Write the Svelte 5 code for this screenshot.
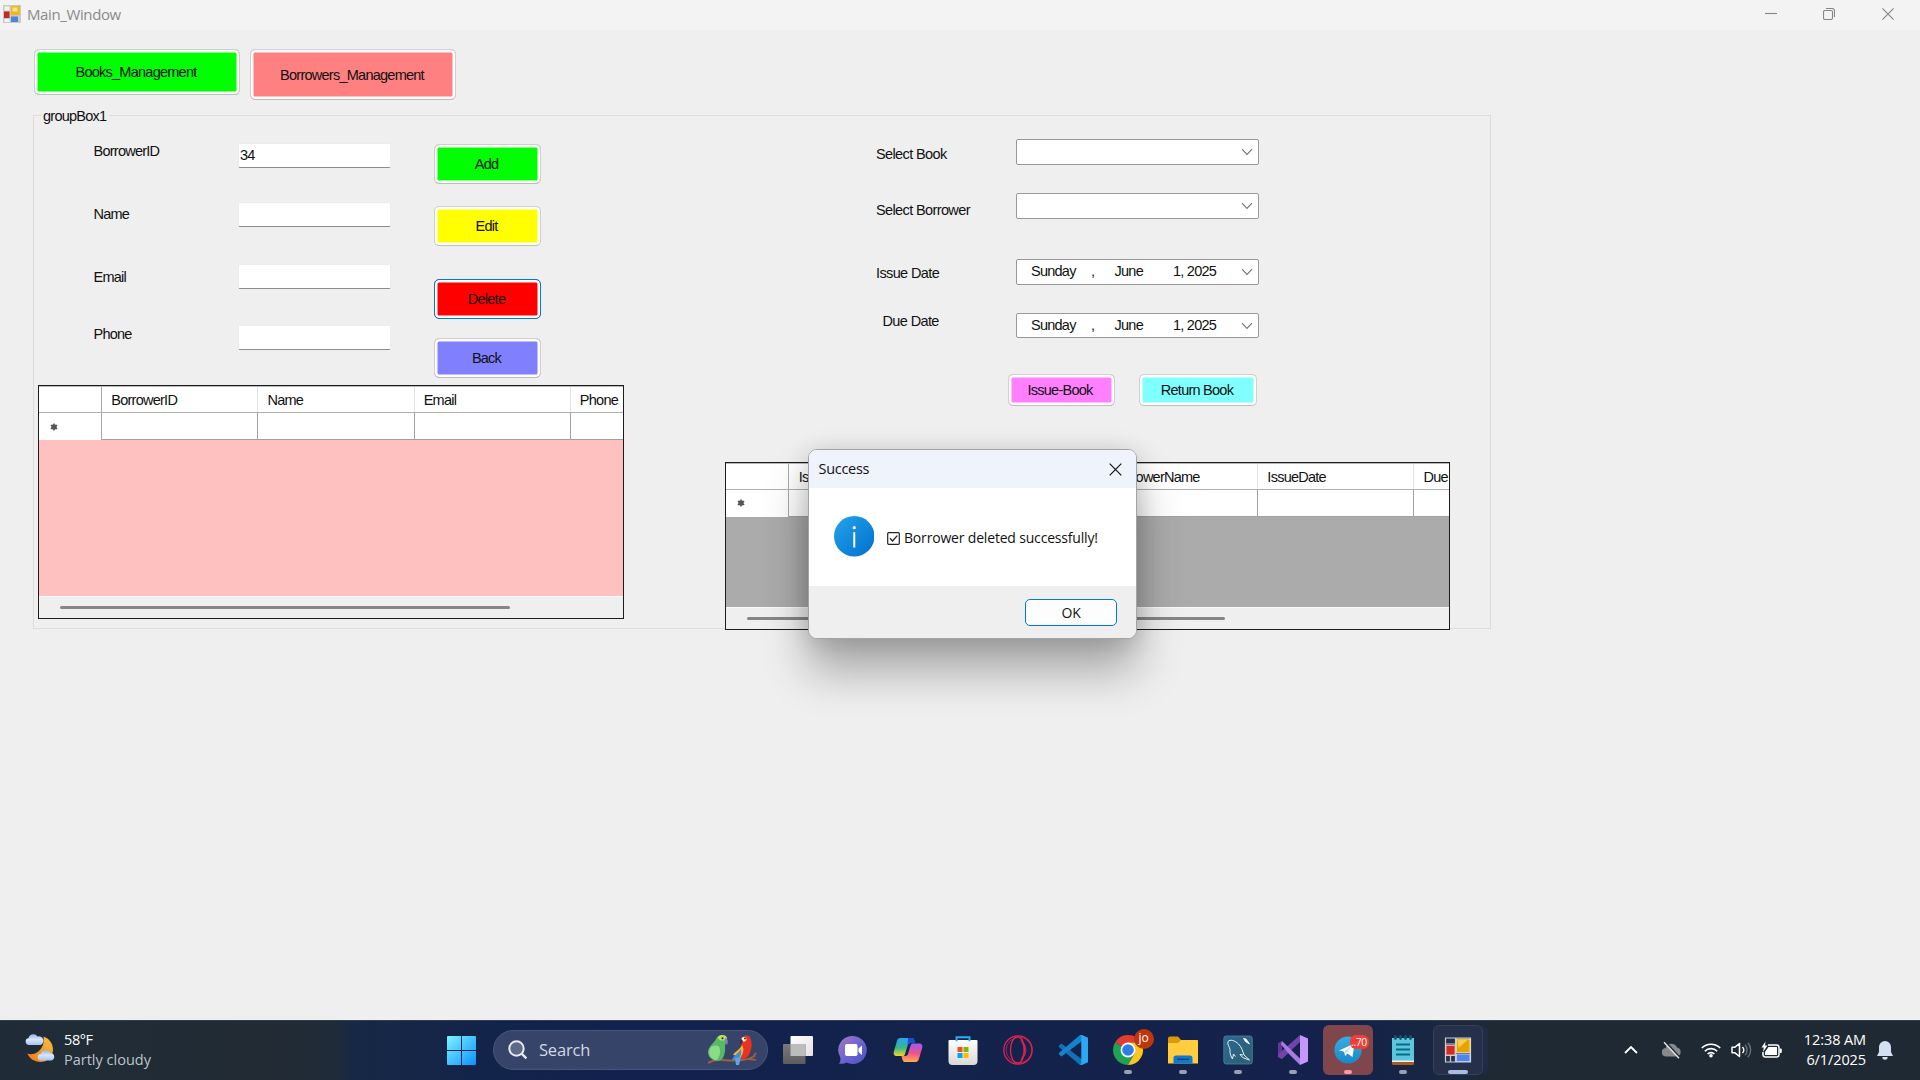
<script>
  const fields = [
    { label: 'BorrowerID', value: '34' },
    { label: 'Name', value: '' },
    { label: 'Email', value: '' },
    { label: 'Phone', value: '' },
  ];
  const actions = [
    { text: 'Add', tone: 'lime' },
    { text: 'Edit', tone: 'yellow' },
    { text: 'Delete', tone: 'red focused' },
    { text: 'Back', tone: 'violet' },
  ];
  const borrowerColumns = ['BorrowerID', 'Name', 'Email', 'Phone'];
  const issueColumns = ['Is', '', 'BorrowerName', 'IssueDate', 'Due'];
</script>

{#snippet chevron()}
  <svg class="chev" viewBox="0 0 12 8"><path d="M1 1.2 6 6.4 11 1.2" fill="none" stroke="#777" stroke-width="1.2" /></svg>
{/snippet}

{#snippet dateText()}
  <span class="d-day">Sunday</span><span class="d-sep">,</span><span class="d-month">June</span><span>1, 2025</span>
{/snippet}

{#snippet table(columns)}
  <div class="row head">
    <div class="rowhead"></div>
    {#each columns as c}<div class="cell">{c}</div>{/each}
  </div>
  <div class="row body">
    <div class="rowhead">
      <svg viewBox="0 0 8 8" width="8" height="8"><g stroke="#555" stroke-width="1.4"><path d="M4 .4v7.2M.8 2.2l6.4 3.6M7.2 2.2.8 5.8" /></g><circle cx="4" cy="4" r="2.7" fill="#555" /></svg>
    </div>
    {#each columns as c}<div class="cell"></div>{/each}
  </div>
{/snippet}

<div class="screen">
  <header class="titlebar">
    <svg class="appicon" viewBox="0 0 18 18">
      <rect width="18" height="18" fill="#c9c9c9" /><rect x="1.5" y="1.5" width="5" height="4" fill="#f5f5f5" />
      <rect x="1.5" y="14" width="5" height="3" fill="#f5f5f5" />
      <rect x="1" y="6.5" width="5.5" height="6.5" fill="#c22b1f" /><rect x="8" y="1" width="9" height="9" fill="#efb91c" />
      <rect x="9.5" y="2.5" width="5" height="4" fill="#fbe08a" /><rect x="8" y="11.5" width="7" height="5.5" fill="#4a86e0" />
    </svg>
    <span class="title">Main_Window</span>
    <div class="winbtns">
      <svg viewBox="0 0 12 12"><path d="M0 5.5h12" /></svg>
      <svg viewBox="0 0 12 12"><rect x=".5" y="2.5" width="9" height="9" rx="1.5" /><path d="M3 .5h6a2.5 2.5 0 0 1 2.5 2.5v6" /></svg>
      <svg viewBox="0 0 12 12"><path d="M.4.4l11.2 11.2M11.6.4.4 11.6" /></svg>
    </div>
  </header>

  <main>
    <nav>
      <button class="btn lime books">Books_Management</button>
      <button class="btn salmon borrowers">Borrowers_Management</button>
    </nav>

    <section class="group">
      <span class="legend">groupBox1</span>
      <div class="left">
        <div class="form">
          <div class="labels">
            {#each fields as f}<span>{f.label}</span>{/each}
          </div>
          <div class="inputs">
            {#each fields as f}<div class="input">{f.value}</div>{/each}
          </div>
          <div class="actions">
            {#each actions as a}<button class="btn {a.tone}">{a.text}</button>{/each}
          </div>
        </div>
        <div class="datagrid pinkgrid">
          {@render table(borrowerColumns)}
          <div class="void"></div>
          <div class="scroll"><i></i></div>
        </div>
      </div>

      <div class="right">
        <div class="rform">
          <div class="rlabels">
            <span>Select Book</span><span>Select Borrower</span><span>Issue Date</span><span>Due Date</span>
          </div>
          <div class="rfields">
            <div class="combo">{@render chevron()}</div>
            <div class="combo">{@render chevron()}</div>
            <div class="combo date">{@render dateText()}{@render chevron()}</div>
            <div class="combo date">{@render dateText()}{@render chevron()}</div>
          </div>
        </div>
        <div class="rbuttons">
          <button class="btn magenta">Issue-Book</button>
          <button class="btn cyan">Return Book</button>
        </div>
        <div class="datagrid graygrid">
          {@render table(issueColumns)}
          <div class="void"></div>
          <div class="scroll"><i></i></div>
        </div>
      </div>
    </section>
  </main>

  <footer class="taskbar">
    <div class="weather">
      <svg viewBox="0 0 30 28">
        <defs>
          <linearGradient id="moon" x1="1" y1="0" x2="0" y2="1"><stop offset="0" stop-color="#f6c33c" /><stop offset="1" stop-color="#f0761c" /></linearGradient>
          <linearGradient id="cld" x1="0" y1="0" x2="0" y2="1"><stop offset="0" stop-color="#8fb2ec" /><stop offset=".5" stop-color="#d9e6fb" /><stop offset="1" stop-color="#a9c3f0" /></linearGradient>
        </defs>
        <path d="M18.5 2.5c6 2 9.500 7.500 9.500 13.200A12.600 12.600 0 0 1 15.400 28C9.500 28 4.500 24.800 2.400 19.600c3.600 1.200 8 .5 11.300-2.400C18 13.500 19.500 8 18.500 2.500Z" fill="url(#moon)" />
        <path d="M3.500 11A3.500 3.500 0 0 1 3.600 4.100 4.800 4.800 0 0 1 12.500 2.600a4.200 4.200 0 0 1 3 8.400Z" fill="url(#cld)" />
        <path d="M16 26.500a3.300 3.300 0 0 1 0-6.600 4.700 4.700 0 0 1 9-1 3.900 3.900 0 0 1 1.500 7.600Z" fill="url(#cld)" />
      </svg>
      <div><b>58°F</b><span>Partly cloudy</span></div>
    </div>

    <svg class="start" viewBox="0 0 29 29">
      <defs><linearGradient id="win" x1="0" y1="0" x2="1" y2="1"><stop offset="0" stop-color="#7df3ff" /><stop offset="1" stop-color="#0a92ff" /></linearGradient></defs>
      <path d="M1 0h13v14H0V1a1 1 0 0 1 1-1ZM15 0h13a1 1 0 0 1 1 1v13H15ZM0 15h14v14H1a1 1 0 0 1-1-1ZM15 15h14v13a1 1 0 0 1-1 1H15Z" fill="url(#win)" />
    </svg>

    <div class="search">
      <svg class="mag" viewBox="0 0 20 20"><circle cx="8.500" cy="8.500" r="7.200" fill="#5c6987" stroke="#e6e9ef" stroke-width="2" /><path d="m13.600 13.600 4.800 4.800" stroke="#e6e9ef" stroke-width="2.300" /></svg>
      <span>Search</span>
      <svg class="birds" viewBox="0 0 52 32">
        <path d="M1 29c5-3 10-3.500 15-3 8 .8 13 1 20 0 4-.6 8-2 12-4M41 25c3 .6 5 .2 8 1M46 23l3-4" fill="none" stroke="#a0603c" stroke-width="1.800" />
        <path d="M9 5c2-5 9-5.500 11-1 .5 3.500-1.500 4.500-2 8 .5 7-1 12.500-5 14.500-6 1-11.500-2-12-8C1 12.500 7 9 9 5Z" fill="#58ba66" />
        <path d="M4 13c-4 6-1 11.500 5 13.500 4-3 5-9 3-14-3-2-6-1-8 .5Z" fill="#8bdc86" />
        <path d="M11 3c3-3 8-2.500 9 1l-3 2.500C14 7 11 6 11 3Z" fill="#c4dd5a" /><path d="M18 4c3 0 3.500 4.500 2 7-1-2-3-3.500-2-7Z" fill="#7b86c9" />
        <circle cx="15.500" cy="4.300" r="1" fill="#222" />
        <path d="M34 8c.5-8 8.500-9 10-2.500 1.200 6 .5 11.500-2.500 16-2.500 3.500-7 4.500-9 2.500C33 18 34.500 13 34 8Z" fill="#e93320" />
        <path d="M35 11c2.500 4 1.500 9-2 13-3-2-5-3-7-3 2-4 7-5 9-10Z" fill="#f4b72e" />
        <path d="M34 15c1 5-1 8-3 11h-6c1-4 6-6 9-11Z" fill="#3d8fdd" /><path d="m28 24 6-1-2 8h-3Z" fill="#5aa8ea" />
        <path d="M34.500 4c2-2 5-1 5 1s-2.500 3.500-4.500 2Z" fill="#fff2e2" /><path d="M34.500 5.500c-2 1-2 3.500-.5 5.500 1-2 2-3 1.500-5Z" fill="#332f35" /><circle cx="38" cy="4.500" r=".9" fill="#222" />
      </svg>
    </div>

    <div class="apps">
      <div class="slot">
        <svg viewBox="0 0 30 28"><defs><linearGradient id="tv1" x1="0" y1="0" x2="0" y2="1"><stop offset="0" stop-color="#7a7a7a" /><stop offset="1" stop-color="#5c5c5c" /></linearGradient><linearGradient id="tv2" x1="0" y1="0" x2="1" y2="1"><stop offset="0" stop-color="#fff" /><stop offset="1" stop-color="#e2e2e2" /></linearGradient></defs>
          <rect x="7.500" y="0" width="22.500" height="20" rx="1" fill="url(#tv2)" /><rect y="8" width="22.500" height="20" rx="1" fill="url(#tv1)" /><rect x="7.500" y="8" width="15" height="12" fill="#bcbcbc" /></svg>
      </div>
      <div class="slot">
        <svg viewBox="0 0 30 30"><defs><linearGradient id="ct" x1="0" y1="0" x2="1" y2="1"><stop offset="0" stop-color="#a37bc0" /><stop offset=".55" stop-color="#6a63cf" /><stop offset="1" stop-color="#4a4fc4" /></linearGradient></defs>
          <path d="M15 1a14 14 0 1 1-6.500 26.500c-2.500 1.500-5 1.500-7.500 1.200 1.500-2 2-4.500 1-7A14 14 0 0 1 15 1Z" fill="url(#ct)" /><rect x="7" y="9" width="12.500" height="12" rx="1.800" fill="#fff" /><path d="m20.500 13.500 3.500-3v9.500l-3.500-3Z" fill="#fff" /></svg>
      </div>
      <div class="slot">
        <svg viewBox="0 0 30 30"><defs>
          <linearGradient id="cp1" x1="0" y1="0" x2="0" y2="1"><stop offset="0" stop-color="#2aa3f5" /><stop offset=".55" stop-color="#35b98a" /><stop offset="1" stop-color="#f4d620" /></linearGradient>
          <linearGradient id="cp2" x1=".5" y1="0" x2=".4" y2="1"><stop offset="0" stop-color="#a05cf0" /><stop offset=".5" stop-color="#f0508c" /><stop offset="1" stop-color="#ffb04a" /></linearGradient></defs>
          <path d="M7 3h12c2 0 2 2 3 5h-4c-2 0-3 1-3.500 3l-2.500 8c-.5 2-1.500 2-3 2H4c-3 0-4-2-3-5L4 6c.5-2 1.500-3 3-3Z" fill="url(#cp1)" /><path d="M15 3h4c2 0 2.500 2 3.500 5H18c-2 0-3 1-3.500 3Z" fill="#1a4fd0" />
          <path d="M23 27H12c-2 0-2.500-2-3.500-6h3.500c2 0 2.800-1 3.300-3l2.300-7.500c.5-1.700 1.500-2 3-2H26c3 0 4 2 3 5l-3 10c-.6 2.300-1.600 3.500-3 3.500Z" fill="url(#cp2)" /></svg>
      </div>
      <div class="slot">
        <svg viewBox="0 0 30 30"><defs><linearGradient id="st" x1="0" y1="0" x2="0" y2="1"><stop offset="0" stop-color="#fff" /><stop offset="1" stop-color="#d8d8d8" /></linearGradient></defs>
          <path d="M1.500 5h27a1 1 0 0 1 1 1v20a4 4 0 0 1-4 4h-21a4 4 0 0 1-4-4V6a1 1 0 0 1 1-1Z" fill="url(#st)" /><path d="M8.500 6.200V2.200h13v4" fill="none" stroke="#22b2f0" stroke-width="2" />
          <path d="M9.500 12h5v5h-5Z" fill="#f25022" /><path d="M15.500 12h5v5h-5Z" fill="#7fba00" /><path d="M9.500 18h5v5h-5Z" fill="#00a4ef" /><path d="M15.500 18h5v5h-5Z" fill="#ffb900" /></svg>
      </div>
      <div class="slot">
        <svg viewBox="0 0 30 30"><g fill="none" stroke="#e5204f"><circle cx="15" cy="15" r="14.200" stroke-width="1.300" /><circle cx="16" cy="15" r="12.800" stroke-width=".9" opacity=".8" /><ellipse cx="14.500" cy="15" rx="7" ry="13.200" stroke-width="1.300" /><path d="M18 5.500c6.500 5 6.500 14 0 19 4-6 4-13 0-19Z" stroke-width="1" /></g></svg>
      </div>
      <div class="slot">
        <svg viewBox="0 0 30 30"><path d="M1 10.500 3.500 8.500 24 24.500V30h-2L.8 12Z" fill="#1272b8" /><path d="M1 19.500 3.500 21.500 24 6V0h-2L.8 18Z" fill="#1583cc" /><path d="M21.500.500 24 0l6 2.800v24.400L24 30l-2.500-.5c1.200.4 1.800-.8 1.800-1.900V2.400c0-1.100-.6-2.300-1.800-1.900Z" fill="#2aa8f3" /></svg>
      </div>
      <div class="slot run">
        <svg viewBox="0 0 30 30"><path d="M15 15 2.010 7.500A15 15 0 0 1 28 7.500H15Z" fill="#e33b2e" /><path d="M15 15 2.010 7.500A15 15 0 0 0 15 30l6.500-11.300Z" fill="#1fa251" /><path d="M15 7.500h13A15 15 0 0 1 15 30l6.500-11.200Z" fill="#fcc61e" /><circle cx="15" cy="15" r="7.400" fill="#fff" /><circle cx="15" cy="15" r="5.800" fill="#2f7de9" /></svg>
        <em class="jo">jo</em>
      </div>
      <div class="slot run">
        <svg viewBox="0 0 30 30"><path d="M0 3.500a2 2 0 0 1 2-2h8l3 3.500h17v6H0Z" fill="#dc9a04" /><path d="M0 8h10l3-3h15.500A1.500 1.500 0 0 1 30 6.500v22H0Z" fill="#ffcd3d" /><path d="M5.500 28.500V23a2.500 2.500 0 0 1 2.500-2.500h14a2.500 2.500 0 0 1 2.500 2.500v5.500Z" fill="#0f78d0" /><path d="M9 24.300h12" stroke="#063f78" stroke-width="1.200" /></svg>
      </div>
      <div class="slot run">
        <svg viewBox="0 0 30 30"><defs><linearGradient id="my" x1="0" y1="0" x2="1" y2="1"><stop offset="0" stop-color="#2d6790" /><stop offset="1" stop-color="#2c5f74" /></linearGradient></defs>
          <rect x=".8" y="1" width="28.500" height="28" rx="2.500" fill="url(#my)" stroke="#4a86a2" stroke-width=".8" /><path d="M5 6.500c2-2.500 7-1 10.500 2.500 3.500 3.500 4 7 5.500 11l5.500 5M5 6.500c-1 3 1.500 5 2 8-.5 4 1 7 2.500 9.500l1-5 2 2.500M20 20l-3-.5c2 3.500 5 4 9.500 5.500" fill="none" stroke="#e8f3f8" stroke-width="1" /><path d="m20.500 3.500 2.500.5 3.500 5-4-2.500Z" fill="#fff" stroke="#fff" stroke-width=".8" /></svg>
      </div>
      <div class="slot run">
        <svg viewBox="0 0 30 30"><path d="M0 8 4 6v18l-4-2Z" fill="#5f3a93" /><path d="M4 24 22 7V0L0 19.500V22Z" fill="#7343ad" /><path d="M4 6l18 17.500V30L11 19 3 9.500Z" fill="#a87ae4" /><path d="M22 0l8 3.500v23L22 30Z" fill="#c796fa" /></svg>
      </div>
      <div class="slot run alert">
        <svg viewBox="0 0 30 30"><defs><linearGradient id="tg" x1="0" y1="0" x2="0" y2="1"><stop offset="0" stop-color="#37aee2" /><stop offset="1" stop-color="#1788c8" /></linearGradient></defs><circle cx="15" cy="15" r="13.600" fill="url(#tg)" /><path d="M6 15.500 21.500 8.500l-2 13.500-5-3.500-2.500 2.500-.8-4.200Z" fill="#fff" /><path d="m11.500 17 7-6-5.500 7Z" fill="#a9cfe6" /></svg>
        <em class="count">..70</em>
      </div>
      <div class="slot run">
        <svg viewBox="0 0 30 30"><path d="M4 26h22v2.500a1.500 1.500 0 0 1-1.500 1.500h-19A1.500 1.500 0 0 1 4 28.500Z" fill="#a85a22" /><path d="M4 24h22v3H4Z" fill="#f2f2f2" /><rect x="4" y="3" width="22" height="22.500" fill="#5cc6dc" /><path d="M8 9.500h14M8 14.500h14M8 19.500h14" stroke="#0b6a85" stroke-width="1.800" /><path d="M7.500 1.500v2M12.500 1.500v2M17.500 1.500v2M22.500 1.500v2" stroke="#0d5a70" stroke-width="2.800" stroke-linecap="round" /></svg>
      </div>
      <div class="slot run active">
        <svg viewBox="0 0 30 30"><path d="M2.500 3h25v24h-25Z" fill="#26314d" stroke="#c9ced6" stroke-width="1.200" /><path d="M2.500 9h10M12.500 3v24M2.500 20.500h25M7.500 20.500V27" stroke="#c9ced6" stroke-width="1.200" /><rect x="3" y="10.500" width="9" height="9.500" fill="#cf2c25" stroke="#f3c6c0" stroke-width=".8" /><rect x="13.500" y="4" width="13.500" height="13.500" fill="#e5a500" stroke="#ffe9a8" stroke-width=".8" /><path d="M14.500 5h10l-9 8Z" fill="#f7cf50" /><rect x="13.500" y="19" width="13.500" height="7.500" fill="#4f86ec" stroke="#cfe0ff" stroke-width=".8" /></svg>
      </div>
    </div>

    <div class="tray">
      <svg class="up" viewBox="0 0 14 8"><path d="m1 7 6-6 6 6" fill="none" stroke="#fff" stroke-width="1.800" /></svg>
      <svg class="cloud" viewBox="0 0 21 18"><path d="M4.500 15.500A4.300 4.300 0 0 1 4.500 7 6.200 6.200 0 0 1 16 6.500a4.600 4.600 0 0 1 0 9Z" fill="#87898d" /><path d="m4.500 1 14.500 16" stroke="#1f2933" stroke-width="2" /><path d="m3 1.300 15 16" stroke="#e8e8e8" stroke-width="1.400" /></svg>
      <svg class="wifi" viewBox="0 0 20 16"><g fill="none" stroke="#fff" stroke-width="1.600"><path d="M.8 6a13 13 0 0 1 18.400 0M3.800 9.200a8.800 8.800 0 0 1 12.400 0M6.600 12a4.800 4.800 0 0 1 6.800 0" /></g><circle cx="10" cy="13.800" r="1.800" fill="#fff" /></svg>
      <svg class="vol" viewBox="0 0 21 16"><path d="M1 5.200h3L8.500 1.500v13L4 10.800H1Z" fill="none" stroke="#fff" stroke-width="1.500" stroke-linejoin="round" /><path d="M11.500 5a4.500 4.500 0 0 1 0 6" fill="none" stroke="#fff" stroke-width="1.400" /><path d="M14 2.800a7.500 7.500 0 0 1 0 10.400M16.800.8a10.500 10.500 0 0 1 0 14.400" fill="none" stroke="#68717a" stroke-width="1.400" /></svg>
      <svg class="bat" viewBox="0 0 21 18"><path d="M7 4h8.500a2.500 2.500 0 0 1 2.500 2.500v7a2.500 2.500 0 0 1-2.500 2.500h-11A2.500 2.500 0 0 1 2 13.500V11" fill="none" stroke="#fff" stroke-width="1.500" /><path d="M7.500 6H16v8H4v-3Z" fill="#fff" /><path d="M18.800 7.500h1a1 1 0 0 1 1 1V11a1 1 0 0 1-1 1h-1Z" fill="#fff" /><path d="M4.500.500.5 6.500h2.300L2 11l4.500-6.500H4Z" fill="#fff" /></svg>
      <div class="clock"><span>12:38 AM</span><span>6/1/2025</span></div>
      <svg class="bell" viewBox="0 0 16 19"><path d="M8 0a6 6 0 0 1 6 6v5l2 4H0l2-4V6a6 6 0 0 1 6-6ZM5.300 16h5.400a2.700 2.700 0 0 1-5.400 0Z" fill="#d3e0f2" /></svg>
    </div>
  </footer>

  <div class="dialog">
    <div class="dtitle"><span>Success</span>
      <svg viewBox="0 0 13 13"><path d="m.7.7 11.600 11.600M12.300.7.700 12.300" stroke="#111" stroke-width="1.200" /></svg>
    </div>
    <div class="dbody">
      <svg class="info" viewBox="0 0 40 40"><defs><linearGradient id="inf" x1="0" y1="0" x2="1" y2="1"><stop offset="0" stop-color="#25a4e8" /><stop offset="1" stop-color="#006fd0" /></linearGradient></defs><circle cx="20" cy="20" r="20" fill="url(#inf)" /><circle cx="20" cy="11.500" r="1.600" fill="#fff" /><path d="M20 16v15" stroke="#fff" stroke-width="2" /></svg>
      <svg class="tick" viewBox="0 0 13 13"><rect x=".7" y=".7" width="11.600" height="11.600" rx="1" fill="none" stroke="#222" stroke-width="1.200" /><path d="m3 6.300 2.500 2.700L10.300 3.600" fill="none" stroke="#222" stroke-width="1.300" /></svg>
      <span>Borrower deleted successfully!</span>
    </div>
    <div class="dfoot"><button>OK</button></div>
  </div>
</div>

<style>
  :global(body) { margin: 0; overflow: hidden; }
  .screen { position: relative; display: flex; flex-direction: column; width: 1920px; height: 1080px; background: #efefef; font: 14.5px/18px "Liberation Sans", Arial, sans-serif; letter-spacing: -0.75px; color: #111; overflow: hidden; white-space: nowrap; }
  .screen *, .screen { box-sizing: border-box; }
  svg { display: block; flex: none; }

  .titlebar { height: 30px; flex: none; display: flex; align-items: center; background: #f3f3f3; padding: 0 26px 2px 3px; }
  .appicon { width: 18px; height: 18px; }
  .title { margin-left: 6px; font: 15px/20px "Open Sans", sans-serif; letter-spacing: -0.38px; color: #8a8a8a; }
  .winbtns { margin-left: auto; display: flex; }
  .winbtns svg { width: 12px; height: 12px; fill: none; stroke: #858585; stroke-width: 1.1; }
  .winbtns svg:nth-child(2) { margin: 0 47px 0 46px; }

  main { flex: 1; padding: 19px 0 0 33px; }
  nav { display: flex; align-items: flex-start; gap: 10px; padding-left: 1px; height: 66px; }
  .btn { font: inherit; letter-spacing: inherit; color: #111; padding: 0 2px 0 0; border: 1px solid #d0d0d0; border-bottom-color: #bdbdbd; border-radius: 5px; box-shadow: inset 0 0 0 2.500px #fdfdfd; background: var(--c); }
  .books { width: 206px; height: 46px; }
  .borrowers { width: 206px; height: 51px; }
  .lime { --c: #00ff00; }
  .salmon { --c: #ff8080; }
  .yellow { --c: #ffff00; }
  .red { --c: #ff0000; }
  .violet { --c: #8080ff; }
  .magenta { --c: #ff80ff; }
  .cyan { --c: #80ffff; }
  .focused { border-color: #0078d4; }

  .group { position: relative; width: 1458px; height: 514px; border: 1px solid #dcdcdc; display: flex; }
  .legend { position: absolute; left: 8px; top: -9px; padding: 0 3px 0 1px; background: #efefef; }
  .left { width: 690.500px; flex: none; padding-top: 1px; }
  .form { display: flex; height: 268px; padding-left: 59.500px; }
  .labels { width: 144.500px; display: flex; flex-direction: column; padding-top: 25px; }
  .labels span:nth-child(2) { margin-top: 44.700px; }
  .labels span:nth-child(3) { margin-top: 45px; }
  .labels span:nth-child(4) { margin-top: 39.300px; }
  .inputs { width: 153px; padding-top: 26px; }
  .input { height: 25px; padding: 2px 1px; background: #fff; border: 1px solid #ececec; border-bottom: 1.500px solid #8c8c8c; border-radius: 2px; }
  .input:nth-child(2) { margin-top: 34px; }
  .input:nth-child(3) { margin-top: 37px; }
  .input:nth-child(4) { margin-top: 36px; }
  .actions { margin-left: 43px; padding-top: 27px; display: flex; flex-direction: column; }
  .actions .btn { width: 107px; height: 40px; }
  .actions .btn:nth-child(2) { margin-top: 22px; }
  .actions .btn:nth-child(3) { margin-top: 32.500px; }
  .actions .btn:nth-child(4) { margin-top: 19px; }

  .datagrid { display: flex; flex-direction: column; overflow: hidden; border: 1.500px solid #1c1c1c; }
  .row { display: flex; flex: none; background: #fff; }
  .row.head { height: 27px; border-top: 1px solid #b8b8b8; border-bottom: 1.500px solid #b0b0b0; }
  .row.body { height: 27px; }
  .rowhead { width: 63.800px; flex: none; border-right: 1px solid #a9a9a9; display: flex; align-items: center; padding-left: 11px; }
  .cell { width: 156.200px; flex: none; padding: 4px 0 0 9px; border-right: 1px solid #e3e3e3; }
  .body .cell { border-right-color: #a0a0a0; border-bottom: 1px solid #a0a0a0; }
  .void { flex: 1; }
  .scroll { height: 22px; flex: none; background: #efefef; border-top: 1px solid #fafafa; padding: 9px 0 0 21px; }
  .scroll i { display: block; height: 3px; border-radius: 2px; background: #868686; }
  .pinkgrid { width: 586px; height: 234px; margin-left: 3.500px; }
  .pinkgrid .void { background: #ffc0c0; }
  .pinkgrid .scroll i { width: 450px; }
  .graygrid { width: 725px; height: 168px; }
  .graygrid .void { background: #ababab; }
  .graygrid .scroll i { width: 478px; }
  .graygrid .cell { padding-left: 9.500px; }

  .right { padding-top: 1px; }
  .rform { display: flex; height: 256.500px; padding-left: 151.500px; }
  .rlabels { width: 140px; padding-top: 28px; display: flex; flex-direction: column; letter-spacing: -0.62px; }
  .rlabels span:nth-child(2) { margin-top: 38px; }
  .rlabels span:nth-child(3) { margin-top: 44.500px; }
  .rlabels span:nth-child(4) { margin: 30.500px 0 0 6.500px; }
  .rfields { padding-top: 22px; }
  .combo { display: flex; align-items: center; width: 242.500px; height: 26px; padding: 0 5px 0 14px; background: #fff; border: 1px solid #999; border-radius: 2px; }
  .combo:nth-child(2) { margin-top: 28px; }
  .combo:nth-child(3) { margin-top: 40px; }
  .combo:nth-child(4) { margin-top: 28px; }
  .combo.date { height: 25.500px; padding-bottom: 1px; }
  .chev { width: 12px; height: 8px; margin-left: auto; }
  .date .chev { margin-top: 2px; }
  .d-day { width: 60px; }
  .d-sep { width: 23.500px; }
  .d-month { width: 58.500px; }
  .rbuttons { display: flex; gap: 24.500px; padding-left: 283px; height: 88px; }
  .rbuttons .btn { width: 107px; height: 32px; }
  .rbuttons .cyan { width: 118px; }

  .dialog { position: absolute; left: 807.500px; top: 449px; width: 329.500px; height: 190px; display: flex; flex-direction: column; background: #fff; border: 1px solid #a3a3a3; border-radius: 9px; overflow: hidden; box-shadow: 0 32px 46px rgba(0, 0, 0, 0.3), 0 2px 24px rgba(0, 0, 0, 0.15); font-family: "Open Sans", "Noto Sans", sans-serif; }
  .dtitle { height: 38px; display: flex; align-items: center; justify-content: space-between; padding: 0 14px 0 10px; background: #eff3fb; font-size: 14.500px; letter-spacing: -0.3px; }
  .dtitle svg { width: 13px; height: 13px; }
  .dbody { height: 98px; display: flex; align-items: center; padding-left: 25px; font-size: 14px; letter-spacing: -0.18px; }
  .info { width: 40.500px; height: 40.500px; margin-top: -1px; }
  .tick { width: 13px; height: 13px; margin: 2px 4.500px 0 12.500px; }
  .dbody span { margin-top: 2px; }
  .dfoot { flex: 1; display: flex; justify-content: flex-end; padding: 13px 19px 0 0; background: #efefef; }
  .dfoot button { width: 92px; height: 27px; padding: 0; border: 1.500px solid #0078d4; border-radius: 5px; background: #fdfdfd; font: 14px/20px "Open Sans", sans-serif; letter-spacing: -0.3px; color: #111; }

  .taskbar { height: 60px; flex: none; display: flex; align-items: center; padding: 0 27px 1px 25px; border-top: 1px solid #2f3f50; letter-spacing: 0; font-family: "Open Sans", "Noto Sans", sans-serif; color: #fff; background: linear-gradient(90deg, #1f2c37 0, #222b34 270px, #1f2b38 335px, #172846 355px, #13244a 480px, #12214e 640px, #13234b 900px, #14214c 1350px, #1a2740 1440px, #1f2933 1500px, #1f2933 1920px); }
  .weather { width: 421.500px; display: flex; gap: 9px; }
  .weather svg { width: 30px; height: 28px; margin-top: 4px; }
  .weather div, .clock { display: flex; flex-direction: column; font-size: 14.500px; line-height: 20px; }
  .weather b { font-weight: 400; letter-spacing: -0.4px; }
  .weather span { color: #bfc4c9; letter-spacing: 0; }
  .start { width: 29px; height: 29px; }
  .search { width: 275px; height: 40px; margin-left: 17px; display: flex; align-items: center; padding: 0 8px 0 14px; border-radius: 20px; border: 1px solid #46567a; background: #36446a; font-size: 16.500px; color: #d3d8e2; }
  .mag { width: 20px; height: 20px; }
  .search span { margin-left: 11.500px; letter-spacing: -0.2px; }
  .birds { width: 52px; height: 32px; margin-left: auto; }
  .apps { display: flex; margin-left: 5px; }
  .slot { position: relative; width: 50px; height: 50px; margin-right: 5px; border-radius: 6px; display: flex; align-items: center; justify-content: center; }
  .slot svg { width: 30px; height: 30px; }
  .slot:first-child svg { height: 28px; }
  .run::after { content: ""; position: absolute; left: 21px; bottom: 1px; width: 8px; height: 4px; border-radius: 2px; background: #9aa0b2; }
  .alert { background: #7f464c; }
  .alert::after { background: #ff98a3; }
  .active { background: #26304a; border: 1px solid #364056; box-shadow: 6px 0 0 -1px #202b45; }
  .active::after { left: 14px; bottom: 0; width: 20px; background: #a9bde0; }
  .slot em { position: absolute; font-style: normal; text-align: center; color: #fff; }
  .jo { left: 31px; top: 4px; width: 20px; height: 20px; border-radius: 50%; background: #bf360c; font-size: 12px; line-height: 18px; }
  .count { left: 27px; top: 10px; width: 19px; height: 14px; border-radius: 6px; background: #f23c34; font-size: 10.500px; line-height: 14px; letter-spacing: -0.4px; }
  .tray { margin-left: auto; display: flex; align-items: center; }
  .up { width: 14px; height: 8px; margin-right: 23px; }
  .cloud { width: 21px; height: 18px; margin-right: 19px; }
  .wifi { width: 20px; height: 16px; margin-right: 10px; }
  .vol { width: 21px; height: 16px; margin-right: 9px; }
  .bat { width: 21px; height: 18px; }
  .clock { width: 84px; text-align: right; letter-spacing: -0.1px; }
  .bell { width: 16px; height: 19px; margin-left: 11px; }
</style>
